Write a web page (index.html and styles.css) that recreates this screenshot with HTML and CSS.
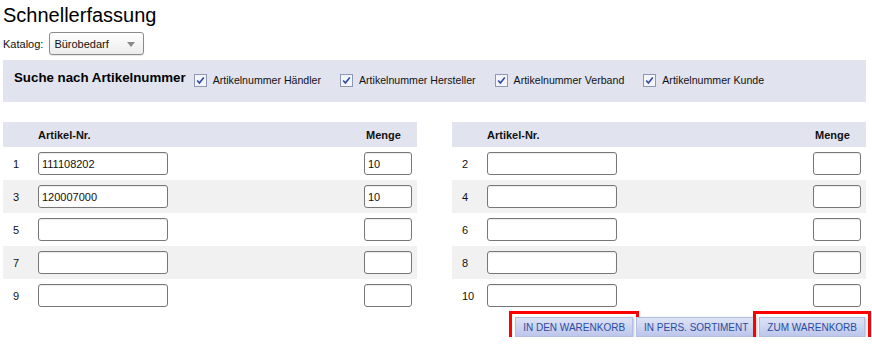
FILE: index.html
```
<!DOCTYPE html>
<html lang="de">
<head>
  <meta charset="UTF-8">
  <meta name="viewport" content="width=device-width, initial-scale=1.0">
  <title>Schnellerfassung</title>
  <link rel="stylesheet" href="styles.css">
</head>
<body>
  <svg class="defs" width="0" height="0">
    <symbol id="checked" viewBox="0 0 13 13">
      <rect x="0.5" y="0.5" width="12" height="12" fill="#f3f5fb" stroke="#8e97b4"/>
      <path d="M3.2 6.4 L5.4 9 L9.8 3.4" fill="none" stroke="#2c49a8" stroke-width="1.6"/>
    </symbol>
  </svg>

  <div class="page">
    <h1 class="title">Schnellerfassung</h1>

    <div class="catalog">
      <span class="catalog-label">Katalog:</span>
      <div class="select">
        <span>Bürobedarf</span>
        <span class="arrow"></span>
      </div>
    </div>

    <!-- Suchoptionen -->
    <div class="search-panel">
      <h2>Suche nach Artikelnummer</h2>
      <label class="check"><svg class="box"><use href="#checked"/></svg>Artikelnummer Händler</label>
      <label class="check"><svg class="box"><use href="#checked"/></svg>Artikelnummer Hersteller</label>
      <label class="check"><svg class="box"><use href="#checked"/></svg>Artikelnummer Verband</label>
      <label class="check"><svg class="box"><use href="#checked"/></svg>Artikelnummer Kunde</label>
    </div>

    <!-- Eingabetabellen -->
    <div class="tables">
      <div class="entry">
        <div class="row head"><span></span><span>Artikel-Nr.</span><span class="qty-head">Menge</span></div>
        <div class="row"><span class="num">1</span><input class="art" value="111108202"><input class="qty" value="10"></div>
        <div class="row alt"><span class="num">3</span><input class="art" value="120007000"><input class="qty" value="10"></div>
        <div class="row"><span class="num">5</span><input class="art"><input class="qty"></div>
        <div class="row alt"><span class="num">7</span><input class="art"><input class="qty"></div>
        <div class="row"><span class="num">9</span><input class="art"><input class="qty"></div>
      </div>
      <div class="entry">
        <div class="row head"><span></span><span>Artikel-Nr.</span><span class="qty-head">Menge</span></div>
        <div class="row"><span class="num">2</span><input class="art"><input class="qty"></div>
        <div class="row alt"><span class="num">4</span><input class="art"><input class="qty"></div>
        <div class="row"><span class="num">6</span><input class="art"><input class="qty"></div>
        <div class="row alt"><span class="num">8</span><input class="art"><input class="qty"></div>
        <div class="row"><span class="num">10</span><input class="art"><input class="qty"></div>
      </div>
    </div>

    <div class="actions">
      <button class="btn marked">IN DEN WARENKORB</button>
      <button class="btn">IN PERS. SORTIMENT</button>
      <button class="btn marked">ZUM WARENKORB</button>
    </div>
  </div>
</body>
</html>
```

FILE: styles.css
```
/* General styling */
body {
  margin: 0;
  font-family: "Liberation Sans", Arial, sans-serif;
  font-size: 11px;
  color: #111;
  background: #fff;
  overflow: hidden;
}

.defs {
  position: absolute;
}

.page {
  width: 863px;
  padding: 3px 0 0 3px;
}

/* Title and catalog */
.title {
  margin: 0;
  font-size: 20px;
  line-height: 24px;
  font-weight: normal;
  color: #000;
}

.catalog {
  display: flex;
  align-items: center;
  gap: 6px;
  margin-top: 5px;
}

.select {
  width: 95px;
  height: 23px;
  box-sizing: border-box;
  display: flex;
  align-items: center;
  justify-content: space-between;
  padding: 1px 8px 0 4px;
  border: 1px solid #8b8b8b;
  border-radius: 3px;
  background: linear-gradient(#ffffff, #ececec);
  box-shadow: 0 1px 1px rgba(0, 0, 0, 0.1);
}

.arrow {
  width: 0;
  height: 0;
  border-left: 4px solid transparent;
  border-right: 4px solid transparent;
  border-top: 5px solid #8a8a8a;
}

/* Search panel */
.search-panel {
  display: flex;
  align-items: flex-start;
  height: 42px;
  box-sizing: border-box;
  margin-top: 5px;
  padding: 10px 0 0 11px;
  background: #e1e3ef;
}

.search-panel h2 {
  margin: 0 8px 0 0;
  font-size: 13.3px;
  line-height: 15px;
  font-weight: bold;
  color: #000;
}

.check {
  display: flex;
  align-items: center;
  gap: 6px;
  margin: 4px 19px 0 0;
  font-size: 10.6px;
  line-height: 13px;
  color: #111;
}

.check:first-of-type {
  margin-left: 0;
}

.box {
  width: 13px;
  height: 13px;
  flex: none;
  margin-top: -1px;
}

/* Entry tables */
.tables {
  display: flex;
  justify-content: space-between;
  margin-top: 20px;
}

.entry {
  width: 414px;
}

.row {
  display: grid;
  grid-template-columns: 35px 1fr 48px;
  align-items: center;
  height: 33px;
  padding-right: 5px;
}

.row.head {
  height: 25px;
  background: #e1e3ef;
  font-weight: bold;
  color: #111;
}

.row.alt {
  background: #f1f1f1;
}

.qty-head {
  padding-left: 2px;
}

.num {
  padding-left: 10px;
}

input {
  height: 23px;
  box-sizing: border-box;
  padding: 0 3px;
  border: 1px solid #777;
  border-radius: 3px;
  font-family: inherit;
  font-size: 11px;
  color: #111;
  background: #fff;
  box-shadow: inset 0 1px 1px rgba(0, 0, 0, 0.08);
}

.art {
  width: 130px;
}

.qty {
  width: 48px;
}

/* Buttons */
.actions {
  display: flex;
  justify-content: flex-end;
  gap: 3px;
  margin-top: 5px;
  padding-right: 1px;
}

.btn {
  height: 20px;
  padding: 0 7px;
  border: 1px solid #b4bee2;
  border-radius: 0;
  background: linear-gradient(#dde3f6, #bcc6ea);
  color: #2b4c9f;
  font-family: inherit;
  font-size: 10px;
  box-shadow: 1px 1px 2px rgba(0, 0, 0, 0.25);
}

.btn.marked {
  outline: 3px solid #f00;
  outline-offset: 3px;
}
```
